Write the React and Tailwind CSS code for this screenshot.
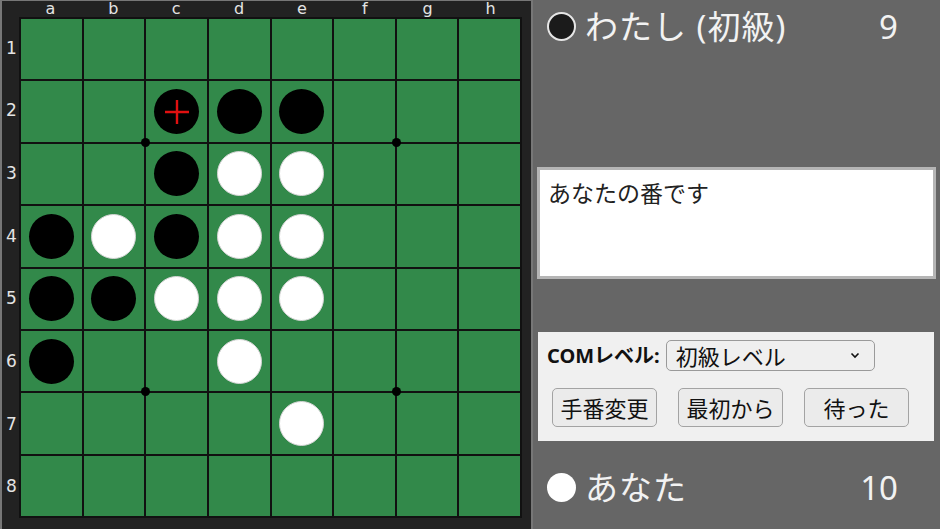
import React from 'react';

const BOARD = [
    '........',
    '..BBB...',
    '..BWW...',
    'BWBWW...',
    'BBWWW...',
    'B..W....',
    '....W...',
    '........',
];

const COLS = ['a', 'b', 'c', 'd', 'e', 'f', 'g', 'h'];
const ROWS = ['1', '2', '3', '4', '5', '6', '7', '8'];

const jp = { fontFamily: '"Noto Sans", "Noto Sans CJK JP", sans-serif' };
const labelFont = { fontFamily: '"DejaVu Sans", "Noto Sans", sans-serif' };

const Disc = ({ color, last }) => (
    <div
        className={
            color === 'B'
                ? 'relative w-[45px] h-[45px] rounded-full bg-black flex items-center justify-center'
                : 'relative w-[45px] h-[45px] rounded-full bg-white border border-[#d4d4d4] flex items-center justify-center'
        }
    >
        {last && (
            <svg width="26" height="26" viewBox="0 0 26 26">
                <path d="M13 1 V25 M1 13 H25" stroke="#e01010" strokeWidth="2.4" />
            </svg>
        )}
    </div>
);

const Board = () => (
    <div className="relative w-[503px] h-[501px] bg-[#111] p-[2px] grid grid-cols-8 grid-rows-8 gap-[2px]">
        {BOARD.map((row, r) =>
            row.split('').map((c, i) => (
                <div key={`${r}-${i}`} className="bg-[#32894a] flex items-center justify-center">
                    {c !== '.' && <Disc color={c} last={r === 1 && i === 2} />}
                </div>
            ))
        )}
        {/* 星 */}
        <span className="absolute left-[122px] top-[121px] w-[9px] h-[9px] rounded-full bg-black" />
        <span className="absolute left-[373px] top-[121px] w-[9px] h-[9px] rounded-full bg-black" />
        <span className="absolute left-[122px] top-[370px] w-[9px] h-[9px] rounded-full bg-black" />
        <span className="absolute left-[373px] top-[370px] w-[9px] h-[9px] rounded-full bg-black" />
    </div>
);

const PlayerRow = ({ black, name, score }) => (
    <div className="flex items-center h-[52px] pl-[14px] pr-[42px]" style={jp}>
        <span
            className={
                black
                    ? 'w-[29px] h-[29px] rounded-full bg-[#1b1b1b] border-2 border-[#e6e6e6]'
                    : 'w-[29px] h-[29px] rounded-full bg-white'
            }
        />
        <span className="ml-[9px] text-[33px] leading-none text-[#f2f2f2] tracking-[1px]">{name}</span>
        <span className="ml-auto text-[33px] leading-none text-[#f2f2f2]">{score}</span>
    </div>
);

const Btn = ({ children }) => (
    <button className="w-[105px] h-[39px] rounded-[5px] border border-[#a3a3a3] bg-[#ebebeb] text-[22px] text-[#111] leading-none">
        {children}
    </button>
);

export default function App() {
    return (
        <div className="flex w-[940px] h-[529px] bg-[#666] overflow-hidden">
            {/* 盤 */}
            <div className="w-[533px] h-[540px] shrink-0 bg-[#222] border-2 border-t border-[#777] grid grid-cols-[17px_503px] grid-rows-[16px_501px] content-start">
                <div />
                <div className="flex text-[#e4e4e4] text-[16px] leading-[16px] h-[16px]" style={labelFont}>
                    {COLS.map(c => (
                        <span key={c} className="flex-1 text-center">{c}</span>
                    ))}
                </div>
                <div className="flex flex-col text-[#e4e4e4] text-[17px] leading-none pl-[2px]" style={labelFont}>
                    {ROWS.map(r => (
                        <span key={r} className="flex-1 flex items-center justify-center">{r}</span>
                    ))}
                </div>
                <Board />
            </div>

            {/* 情報パネル */}
            <div className="flex-1 flex flex-col">
                <PlayerRow black name="わたし (初級)" score="9" />

                <div className="mt-[115px] mx-[4px] h-[112px] bg-white border-[3px] border-[#b5b5b5] pl-[8px] pt-[12px]" style={jp}>
                    <span className="text-[23px] leading-none text-[#222]">あなたの番です</span>
                </div>

                <div className="mt-[53px] ml-[5px] mr-[6px] h-[109px] bg-[#f0f0f0] pt-[8px]" style={jp}>
                    <div className="flex items-center pl-[9px]">
                        <span className="text-[20px] font-bold text-[#111] leading-none">COMレベル:</span>
                        <div className="ml-[6px] w-[209px] h-[31px] rounded-[5px] border border-[#9a9a9a] bg-[#efefef] flex items-center pl-[9px] pr-[14px]">
                            <span className="text-[22px] leading-none text-[#111]">初級レベル</span>
                            <svg className="ml-auto" width="10" height="7" viewBox="0 0 10 7">
                                <path d="M1.5 1.5 L5 5 L8.5 1.5" stroke="#111" strokeWidth="1.6" fill="none" />
                            </svg>
                        </div>
                    </div>
                    <div className="flex gap-[21px] pl-[14px] mt-[17px]">
                        <Btn>手番変更</Btn>
                        <Btn>最初から</Btn>
                        <Btn>待った</Btn>
                    </div>
                </div>

                <div className="mt-[20px]">
                    <PlayerRow name="あなた" score="10" />
                </div>
            </div>
        </div>
    );
}
